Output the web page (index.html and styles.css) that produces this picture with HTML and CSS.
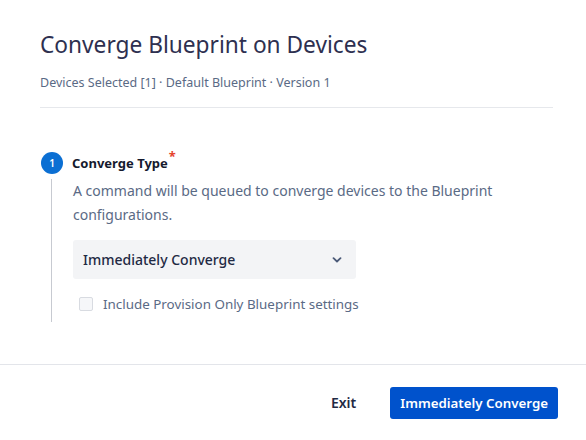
FILE: index.html
```html
<!DOCTYPE html>
<html lang="en">
<head>
    <meta charset="UTF-8">
    <title>Converge Blueprint on Devices</title>
    <link rel="stylesheet" href="styles.css">
</head>
<body>
    <div class="modal">
        <!-- Header -->
        <div class="modal-header">
            <h1>Converge Blueprint on Devices</h1>
            <p class="meta">Devices Selected [1] · Default Blueprint · Version 1</p>
        </div>

        <!-- Step -->
        <div class="step">
            <div class="step-title">
                <span class="step-num">1</span>
                <span class="step-label">Converge Type<span class="req">*</span></span>
            </div>
            <div class="step-body">
                <p class="desc">A command will be queued to converge devices to the Blueprint configurations.</p>
                <div class="select">
                    <span>Immediately Converge</span>
                    <svg width="10" height="6" viewBox="0 0 10 6"><path d="M1.5 1.2 L5 4.5 L8.5 1.2" fill="none" stroke="#4b5a78" stroke-width="1.8" stroke-linecap="round" stroke-linejoin="round"/></svg>
                </div>
                <label class="check">
                    <span class="box"></span>
                    Include Provision Only Blueprint settings
                </label>
            </div>
        </div>

        <!-- Footer -->
        <div class="modal-footer">
            <button class="btn-link">Exit</button>
            <button class="btn-primary">Immediately Converge</button>
        </div>
    </div>
</body>
</html>
```

FILE: styles.css
```css
body {
    margin: 0;
    font-family: 'Noto Sans', sans-serif;
    background: #fff;
    color: #5a6a85;
}

.modal {
    width: 586px;
    height: 440px;
    display: flex;
    flex-direction: column;
}

.modal-header {
    margin: 0 33px 0 40px;
    padding-top: 30px;
    border-bottom: 1px solid #e6e8ec;
}

h1 {
    margin: 0;
    font-size: 22.7px;
    font-weight: 400;
    color: #2e3050;
    line-height: 30px;
}

.meta {
    margin: 15px 0 0;
    font-size: 12.5px;
    line-height: 16px;
    padding-bottom: 16px;
}

.step {
    margin: 44px 0 0 41px;
}

.step-title {
    display: flex;
    align-items: center;
    gap: 9px;
}

.step-num {
    width: 22px;
    height: 22px;
    border-radius: 50%;
    background: #0b6fd3;
    color: #fff;
    font-size: 10px;
    font-weight: 600;
    display: flex;
    align-items: center;
    justify-content: center;
}

.step-label {
    font-size: 13px;
    font-weight: 700;
    color: #151a2e;
    position: relative;
}

.req {
    color: #e5442e;
    position: absolute;
    top: -7px;
    right: -8px;
    font-size: 13px;
}

.step-body {
    margin: 5px 0 0 10px;
    padding: 0 0 9px 21px;
    border-left: 1px solid #c7cad1;
}

.desc {
    margin: 0;
    width: 420px;
    font-size: 14px;
    line-height: 24px;
}

.select {
    margin-top: 13px;
    width: 283px;
    height: 39px;
    background: #f3f4f6;
    border-radius: 3px;
    box-sizing: border-box;
    padding: 0 14px 0 10px;
    display: flex;
    align-items: center;
    justify-content: space-between;
    font-size: 14px;
    font-weight: 500;
    color: #1f2a44;
}

.check {
    margin-top: 16px;
    display: flex;
    align-items: center;
    gap: 10px;
    padding-left: 6px;
    font-size: 13.4px;
}

.box {
    width: 12px;
    height: 12px;
    border: 1px solid #d8dbe1;
    border-radius: 2px;
    background: #f6f7f9;
}

.modal-footer {
    margin-top: auto;
    height: 75px;
    border-top: 1px solid #e3e5ea;
    display: flex;
    align-items: center;
    justify-content: flex-end;
    gap: 12px;
    padding-right: 28px;
}

button {
    font-family: inherit;
    font-size: 14px;
    font-weight: 600;
    border: none;
    cursor: pointer;
}

.btn-link {
    background: none;
    color: #1f2a44;
    padding: 0 22px;
}

.btn-primary {
    background: #0052cc;
    color: #fff;
    height: 32px;
    padding: 0 10px;
    font-size: 13.3px;
    border-radius: 3px;
}
```
